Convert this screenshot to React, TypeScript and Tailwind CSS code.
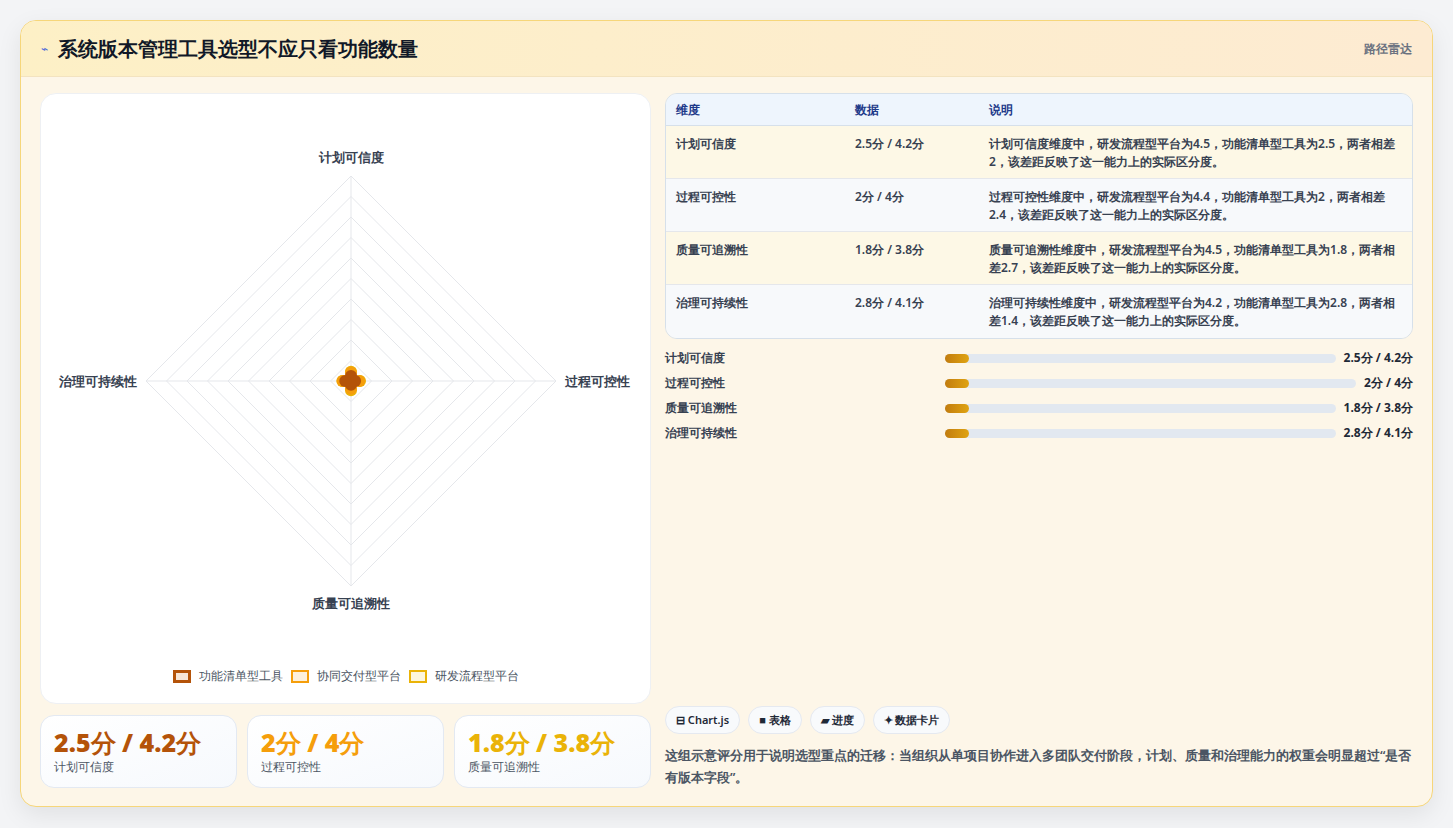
import React from "react";

const rows = [
  ["计划可信度", "2.5分 / 4.2分", "计划可信度维度中，研发流程型平台为4.5，功能清单型工具为2.5，两者相差2，该差距反映了这一能力上的实际区分度。", "bg-[#fdf8e6]"],
  ["过程可控性", "2分 / 4分", "过程可控性维度中，研发流程型平台为4.4，功能清单型工具为2，两者相差2.4，该差距反映了这一能力上的实际区分度。", "bg-[#f7f9fb]"],
  ["质量可追溯性", "1.8分 / 3.8分", "质量可追溯性维度中，研发流程型平台为4.5，功能清单型工具为1.8，两者相差2.7，该差距反映了这一能力上的实际区分度。", "bg-[#fdf8e6]"],
  ["治理可持续性", "2.8分 / 4.1分", "治理可持续性维度中，研发流程型平台为4.2，功能清单型工具为2.8，两者相差1.4，该差距反映了这一能力上的实际区分度。", "bg-[#f7f9fb]"],
];

const bars = [
  ["计划可信度", "2.5分 / 4.2分"],
  ["过程可控性", "2分 / 4分"],
  ["质量可追溯性", "1.8分 / 3.8分"],
  ["治理可持续性", "2.8分 / 4.1分"],
];

function Radar() {
  const cx = 310, cy = 287, R = 205;
  const rings = Array.from({ length: 10 }, (_, i) => (R * (i + 1)) / 10);
  const dia = (r: number) => `${cx},${cy - r} ${cx + r},${cy} ${cx},${cy + r} ${cx - r},${cy}`;
  const s = (v: number) => v * 2.05;
  const poly = (a: number[]) => `${cx},${cy - s(a[0])} ${cx + s(a[1])},${cy} ${cx},${cy + s(a[2])} ${cx - s(a[3])},${cy}`;
  const sets: [number[], string][] = [
    [[4.5, 4.4, 4.5, 4.2], "#eab308"],
    [[4.2, 4, 3.8, 4.1], "#f59e0b"],
    [[2.5, 2, 1.8, 2.8], "#b45309"],
  ];
  return (
    <svg width="610" height="560" className="block">
      {rings.map((r) => (
        <polygon key={r} points={dia(r)} fill="none" stroke="#e5e7eb" strokeWidth="1" />
      ))}
      <line x1={cx} y1={cy - R} x2={cx} y2={cy + R} stroke="#e5e7eb" />
      <line x1={cx - R} y1={cy} x2={cx + R} y2={cy} stroke="#e5e7eb" />
      {sets.map(([a, c], i) => (
        <g key={i}>
          <polygon points={poly(a)} fill={c} fillOpacity="0.3" stroke={c} strokeWidth="2" />
          {[[0, -a[0]], [a[1], 0], [0, a[2]], [-a[3], 0]].map(([x, y], j) => (
            <circle key={j} cx={cx + s(x)} cy={cy + s(y)} r="6" fill={c} />
          ))}
        </g>
      ))}
      <text x={cx} y={cy - 219} textAnchor="middle" fontSize="13" fill="#374151" fontWeight="600">计划可信度</text>
      <text x={cx} y={cy + 227} textAnchor="middle" fontSize="13" fill="#374151" fontWeight="600">质量可追溯性</text>
      <text x={cx + 214} y={cy + 5} textAnchor="start" fontSize="13" fill="#374151" fontWeight="600">过程可控性</text>
      <text x={cx - 214} y={cy + 5} textAnchor="end" fontSize="13" fill="#374151" fontWeight="600">治理可持续性</text>
    </svg>
  );
}

export default function App() {
  return (
    <div className="w-[1453px] h-[828px] bg-[#f3f4f6] pt-[20px] px-[20px] font-['Noto_Sans_CJK_SC','Noto_Sans',sans-serif]">
      <div className="w-[1413px] h-[787px] rounded-[16px] border border-[#f6d67a] bg-[#fdf6e8] overflow-hidden shadow-[0_8px_24px_rgba(0,0,0,0.08)] flex flex-col">
        <div className="h-[56px] shrink-0 flex items-center justify-between px-[20px] bg-gradient-to-r from-[#fdf0c6] to-[#fdebd2] border-b border-[#f3e3c0]">
          <div className="flex items-center gap-[10px]">
            <span className="text-[#4f6bd8] text-[12px]">⌁</span>
            <span className="text-[20px] font-black text-[#111827]">系统版本管理工具选型不应只看功能数量</span>
          </div>
          <span className="text-[12px] text-[#6b7280] font-semibold">路径雷达</span>
        </div>
        <div className="flex-1 flex gap-[14px] pt-[16px] px-[19px]">
          <div className="w-[611px] flex flex-col gap-[11px]">
            <div className="h-[611px] bg-white rounded-[16px] border border-[#eef0f3] flex flex-col items-center">
              <Radar />
              <div className="flex items-center gap-[8px] text-[12px] text-[#4b5563] mt-[13px]">
                <span className="w-[18px] h-[13px] border-[3px] border-[#b45309] bg-[#f8e6d6]" />功能清单型工具
                <span className="w-[18px] h-[13px] border-[2px] border-[#f59e0b] bg-[#fdf0dc]" />协同交付型平台
                <span className="w-[18px] h-[13px] border-[2px] border-[#eab308] bg-[#fdf6dc]" />研发流程型平台
              </div>
            </div>
            <div className="flex gap-[10px]">
              {[
                ["2.5分 / 4.2分", "计划可信度", "text-[#b45309]"],
                ["2分 / 4分", "过程可控性", "text-[#f59e0b]"],
                ["1.8分 / 3.8分", "质量可追溯性", "text-[#eab308]"],
              ].map(([v, l, c]) => (
                <div key={l} className="flex-1 h-[73px] rounded-[14px] border border-[#e3e9f2] bg-gradient-to-br from-white to-[#f6f9fd] px-[13px] pt-[10px]">
                  <div className={`text-[25px] font-black leading-[32px] ${c}`}>{v}</div>
                  <div className="text-[12px] text-[#4b5563]">{l}</div>
                </div>
              ))}
            </div>
          </div>
          <div className="flex-1 flex flex-col">
            <div className="rounded-[12px] border border-[#d6e0ea] overflow-hidden text-[12px] font-semibold text-[#374151]">
              <div className="flex h-[32px] items-center bg-[#eef5fd] text-[#1e3a8a] border-b border-[#d6e0ea]">
                <div className="w-[189px] pl-[10px]">维度</div>
                <div className="w-[134px]">数据</div>
                <div className="flex-1">说明</div>
              </div>
              {rows.map(([a, b, c, bg]) => (
                <div key={a} className={`flex h-[53px] pt-[9px] border-b border-[#e5e7eb] last:border-b-0 ${bg}`}>
                  <div className="w-[189px] pl-[10px]">{a}</div>
                  <div className="w-[134px]">{b}</div>
                  <div className="flex-1 pr-[14px] leading-[18px]">{c}</div>
                </div>
              ))}
            </div>
            <div className="mt-[10px] flex flex-col gap-[7px] text-[12px] font-semibold text-[#374151]">
              {bars.map(([a, b]) => (
                <div key={a} className="flex items-center h-[18px]">
                  <div className="w-[280px]">{a}</div>
                  <div className="flex-1 h-[9px] rounded-full bg-[#e2e8f0] mr-[8px]">
                    <div className="w-[24px] h-[9px] rounded-full bg-gradient-to-r from-[#c27c0e] to-[#e0a412]" />
                  </div>
                  <div className="text-[#1f2937] font-bold">{b}</div>
                </div>
              ))}
            </div>
            <div className="flex-1" />
            <div className="flex gap-[8px] text-[11px] font-semibold text-[#1f2937]">
              {["⊟ Chart.js", "■ 表格", "▰ 进度", "✦ 数据卡片"].map((t) => (
                <span key={t} className="h-[28px] px-[10px] rounded-full border border-[#e5e9f0] bg-[#f8fafc] flex items-center">{t}</span>
              ))}
            </div>
            <p className="mt-[10px] mb-[18px] text-[13px] leading-[22px] font-semibold text-[#4b5563]">
              这组示意评分用于说明选型重点的迁移：当组织从单项目协作进入多团队交付阶段，计划、质量和治理能力的权重会明显超过“是否有版本字段”。
            </p>
          </div>
        </div>
      </div>
    </div>
  );
}
